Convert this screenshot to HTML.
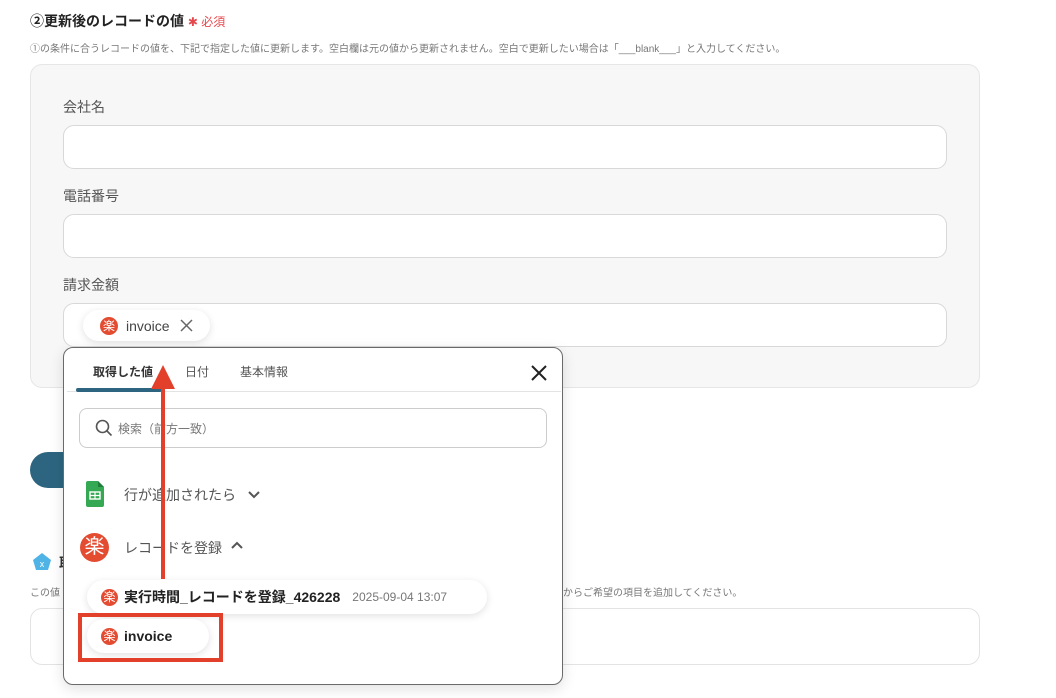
<!DOCTYPE html>
<html><head><meta charset="utf-8"><style>
*{box-sizing:border-box;margin:0;padding:0}
body{width:1056px;height:698px;overflow:hidden;background:#fff;font-family:"Liberation Sans","Noto Sans CJK JP",sans-serif;color:#333;position:relative}
.a{position:absolute}
.inp{position:absolute;left:63px;width:884px;height:44px;background:#fff;border:1px solid #d8d8d8;border-radius:11px}
.lbl{position:absolute;left:63px;font-size:14px;color:#555}
.raku{display:inline-block;border-radius:50%;background:#e44c32;color:#fff;text-align:center;font-weight:normal}
.chip{position:absolute;background:#fff;border-radius:17px;box-shadow:0 2px 8px rgba(0,0,0,.12);display:flex;align-items:center}
</style></head><body>
<div class="a" style="left:30px;top:11px;font-size:14px;font-weight:bold;color:#222">②更新後のレコードの値 <span style="color:#e5484d;font-weight:normal;font-size:12px">✱ 必須</span></div>
<div class="a" style="left:30px;top:40px;font-size:10px;color:#777;white-space:nowrap">①の条件に合うレコードの値を、下記で指定した値に更新します。空白欄は元の値から更新されません。空白で更新したい場合は「___blank___」と入力してください。</div>
<div class="a" style="left:30px;top:64px;width:950px;height:324px;background:#f7f7f7;border:1px solid #e6e6e6;border-radius:12px"></div>
<div class="lbl" style="top:97px">会社名</div>
<div class="inp" style="top:125px"></div>
<div class="lbl" style="top:186px">電話番号</div>
<div class="inp" style="top:214px"></div>
<div class="lbl" style="top:275px">請求金額</div>
<div class="inp" style="top:303px"></div>
<div class="chip" style="left:83px;top:310px;width:127px;height:31px;padding-left:17px"><span class="raku" style="width:18px;height:18px;font-size:12px;line-height:18px">楽</span><span style="margin-left:8px;font-size:14px;color:#444">invoice</span><svg style="margin-left:10px" width="13" height="13" viewBox="0 0 13 13"><path d="M1 1L12 12M12 1L1 12" stroke="#666" stroke-width="1.5"/></svg></div>

<div class="a" style="left:30px;top:452px;width:60px;height:36px;background:#2d6580;border-radius:18px"></div>
<svg class="a" style="left:32px;top:552px" width="20" height="20" viewBox="0 0 20 20"><polygon points="10,1 19,8 16,18 4,18 1,8" fill="#4fb3e6"/><text x="10" y="15" font-size="9" fill="#fff" text-anchor="middle" font-family="Liberation Sans">x</text></svg>
<div class="a" style="left:59px;top:553px;font-size:14px;font-weight:bold">取</div>
<div class="a" style="left:30px;top:584px;font-size:10px;color:#777">この値</div>
<div class="a" style="left:563px;top:584px;font-size:10px;color:#777">からご希望の項目を追加してください。</div>
<div class="a" style="left:30px;top:608px;width:950px;height:57px;border:1px solid #e3e3e3;border-radius:12px"></div>

<div class="a" style="left:63px;top:347px;width:500px;height:338px;background:#fff;border:1px solid #6a6a6a;border-radius:10px;box-shadow:0 4px 14px rgba(0,0,0,.12)">
 <div class="a" style="left:29px;top:15px;font-size:12px;font-weight:bold;color:#333">取得した値</div>
 <div class="a" style="left:121px;top:15px;font-size:12px;color:#555">日付</div>
 <div class="a" style="left:176px;top:15px;font-size:12px;color:#555">基本情報</div>
 <div class="a" style="left:3px;top:43px;width:494px;height:1px;background:#e3e3e3"></div>
 <div class="a" style="left:12px;top:40px;width:86px;height:4px;background:#2d6580;border-radius:2px"></div>
 <svg class="a" style="left:466px;top:16px" width="18" height="18" viewBox="0 0 18 18"><path d="M2 2L16 16M16 2L2 16" stroke="#222" stroke-width="2"/></svg>
 <div class="a" style="left:15px;top:60px;width:468px;height:40px;border:1px solid #ccc;border-radius:8px"></div>
 <svg class="a" style="left:31px;top:71px" width="18" height="18" viewBox="0 0 18 18"><circle cx="7.5" cy="7.5" r="6" fill="none" stroke="#555" stroke-width="1.6"/><path d="M12 12L16.5 16.5" stroke="#555" stroke-width="1.6"/></svg>
 <div class="a" style="left:54px;top:72px;font-size:12px;color:#777">検索（前方一致）</div>
 <svg class="a" style="left:22px;top:133px" width="18" height="26" viewBox="0 0 18 26"><path d="M0 2Q0 0 2 0H12L18 6V24Q18 26 16 26H2Q0 26 0 24Z" fill="#34a853"/><path d="M12 0L18 6H12Z" fill="#1e7e3a"/><rect x="4" y="11" width="10" height="7" fill="none" stroke="#fff" stroke-width="1.4"/><path d="M9 11V18M4 14.5H14" stroke="#fff" stroke-width="1.2"/></svg>
 <div class="a" style="left:60px;top:137px;font-size:14px;color:#555">行が追加されたら</div>
 <svg class="a" style="left:183px;top:141px" width="14" height="10" viewBox="0 0 14 10"><path d="M2 3L7 8L12 3" fill="none" stroke="#555" stroke-width="2"/></svg>
 <span class="raku a" style="left:16px;top:185px;width:29px;height:29px;font-size:20px;line-height:29px">楽</span>
 <div class="a" style="left:60px;top:190px;font-size:14px;color:#555">レコードを登録</div>
 <svg class="a" style="left:166px;top:193px" width="14" height="10" viewBox="0 0 14 10"><path d="M2 7L7 2L12 7" fill="none" stroke="#555" stroke-width="2"/></svg>
</div>
<div class="chip" style="left:87px;top:580px;width:400px;height:34px;padding-left:14px"><span class="raku" style="width:17px;height:17px;font-size:12px;line-height:17px">楽</span><span style="margin-left:6px;font-size:14px;font-weight:bold;color:#222">実行時間_レコードを登録_426228</span><span style="margin-left:12px;font-size:12px;color:#777">2025-09-04 13:07</span></div>
<div class="chip" style="left:87px;top:619px;width:122px;height:34px;padding-left:14px"><span class="raku" style="width:17px;height:17px;font-size:12px;line-height:17px">楽</span><span style="margin-left:6px;font-size:14px;font-weight:bold;color:#222">invoice</span></div>
<div class="a" style="left:78px;top:613px;width:145px;height:49px;border:4px solid #e3402b"></div>
<div class="a" style="left:161px;top:385px;width:4px;height:194px;background:#e3402b"></div>
<svg class="a" style="left:150px;top:365px" width="26" height="24" viewBox="0 0 26 24"><polygon points="13,0 25,24 1,24" fill="#e3402b"/></svg>
</body></html>
